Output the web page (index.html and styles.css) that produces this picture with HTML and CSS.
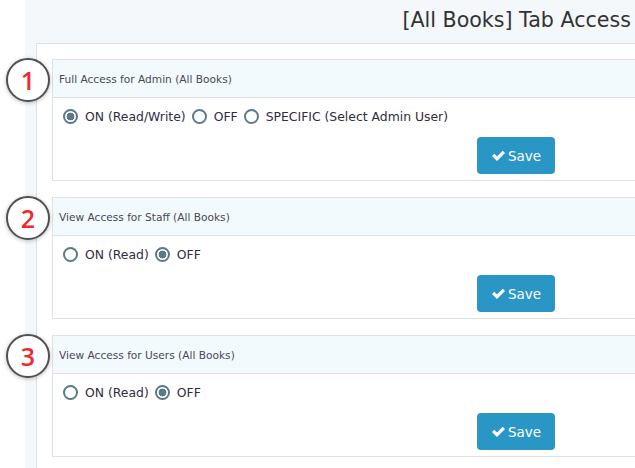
FILE: index.html
```html
<!DOCTYPE html>
<html lang="en">
<head>
    <meta charset="UTF-8">
    <meta name="viewport" content="width=device-width, initial-scale=1.0">
    <title>[All Books] Tab Access</title>
    <link rel="stylesheet" href="styles.css">
</head>
<body>
    <div class="page">
        <h1 class="title">[All Books] Tab Access</h1>
        <div class="panel">
            <div class="card">
                <span class="step">1</span>
                <div class="card-head">Full Access for Admin (All Books)</div>
                <div class="card-body">
                    <div class="options">
                        <label><input type="radio" name="admin" checked> ON (Read/Write)</label>
                        <label><input type="radio" name="admin"> OFF</label>
                        <label><input type="radio" name="admin"> SPECIFIC (Select Admin User)</label>
                    </div>
                    <div class="actions">
                        <button class="btn-save"><svg viewBox="0 0 16 14" width="15" height="13"><path d="M1 7.5l2.4-2.4 3 3L12.6 1.9 15 4.3 6.4 12.9z" fill="#fff"/></svg>Save</button>
                    </div>
                </div>
            </div>
            <div class="card">
                <span class="step">2</span>
                <div class="card-head">View Access for Staff (All Books)</div>
                <div class="card-body">
                    <div class="options">
                        <label><input type="radio" name="staff"> ON (Read)</label>
                        <label><input type="radio" name="staff" checked> OFF</label>
                    </div>
                    <div class="actions">
                        <button class="btn-save"><svg viewBox="0 0 16 14" width="15" height="13"><path d="M1 7.5l2.4-2.4 3 3L12.6 1.9 15 4.3 6.4 12.9z" fill="#fff"/></svg>Save</button>
                    </div>
                </div>
            </div>
            <div class="card">
                <span class="step">3</span>
                <div class="card-head">View Access for Users (All Books)</div>
                <div class="card-body">
                    <div class="options">
                        <label><input type="radio" name="users"> ON (Read)</label>
                        <label><input type="radio" name="users" checked> OFF</label>
                    </div>
                    <div class="actions">
                        <button class="btn-save"><svg viewBox="0 0 16 14" width="15" height="13"><path d="M1 7.5l2.4-2.4 3 3L12.6 1.9 15 4.3 6.4 12.9z" fill="#fff"/></svg>Save</button>
                    </div>
                </div>
            </div>
        </div>
    </div>
</body>
</html>
```

FILE: styles.css
```css
body {
    font-family: "DejaVu Sans", "Open Sans", sans-serif;
    background-color: #fff;
    margin: 0;
    padding: 0;
    overflow: hidden;
    height: 468px;
}
.page {
    margin-left: 25px;
    padding-left: 11px;
    background-color: #f4f8fb;
    height: 100%;
}
.title {
    margin: 0;
    height: 43px;
    line-height: 40px;
    text-align: right;
    font-size: 20.6px;
    font-weight: 400;
    color: #333;
    padding-right: 4px;
    white-space: nowrap;
}
.panel {
    box-sizing: border-box;
    background-color: #fff;
    border: 1px solid #dcdfe3;
    border-right: none;
    border-bottom: none;
    padding: 15px 0 0 15px;
    height: calc(100% - 43px);
}
.card {
    position: relative;
    border: 1px solid #dde2e6;
    border-right: none;
    margin-bottom: 16px;
}
.card-head {
    height: 37px;
    line-height: 38px;
    background-color: #f3fafd;
    border-bottom: 1px solid #dde2e6;
    padding-left: 6px;
    font-size: 10.6px;
    color: #4a4656;
}
.card-body {
    padding: 8px 0 6px 10px;
}
.options {
    display: flex;
    align-items: center;
    height: 20px;
}
.options label {
    display: flex;
    align-items: center;
    font-size: 12.4px;
    color: #302c3e;
    margin-right: 6px;
    white-space: nowrap;
}
.options input {
    appearance: none;
    -webkit-appearance: none;
    width: 15px;
    height: 15px;
    margin: 0 7px 0 0;
    border: 2px solid #5b7987;
    border-radius: 50%;
    box-sizing: border-box;
    background-color: #fff;
}
.options input:checked {
    background: radial-gradient(circle, #5b7987 0 3.6px, #fff 4.2px);
}
.actions {
    padding: 11px 0 0 414px;
}
.btn-save {
    display: flex;
    align-items: center;
    gap: 2px;
    width: 78px;
    height: 37px;
    padding: 0 0 0 14px;
    border: none;
    border-radius: 4px;
    background-color: #2a96c6;
    color: #fff;
    font-family: inherit;
    font-size: 13.5px;
    cursor: pointer;
}
.step {
    position: absolute;
    left: -47px;
    top: -2px;
    width: 44px;
    height: 44px;
    box-sizing: border-box;
    border: 2px solid #505050;
    border-radius: 50%;
    background-color: #fff;
    box-shadow: 0 1px 4px rgba(0, 0, 0, 0.25);
    color: #ef2a2e;
    font-family: "Open Sans", sans-serif;
    font-size: 25px;
    font-weight: 600;
    line-height: 40px;
    text-align: center;
}
```
